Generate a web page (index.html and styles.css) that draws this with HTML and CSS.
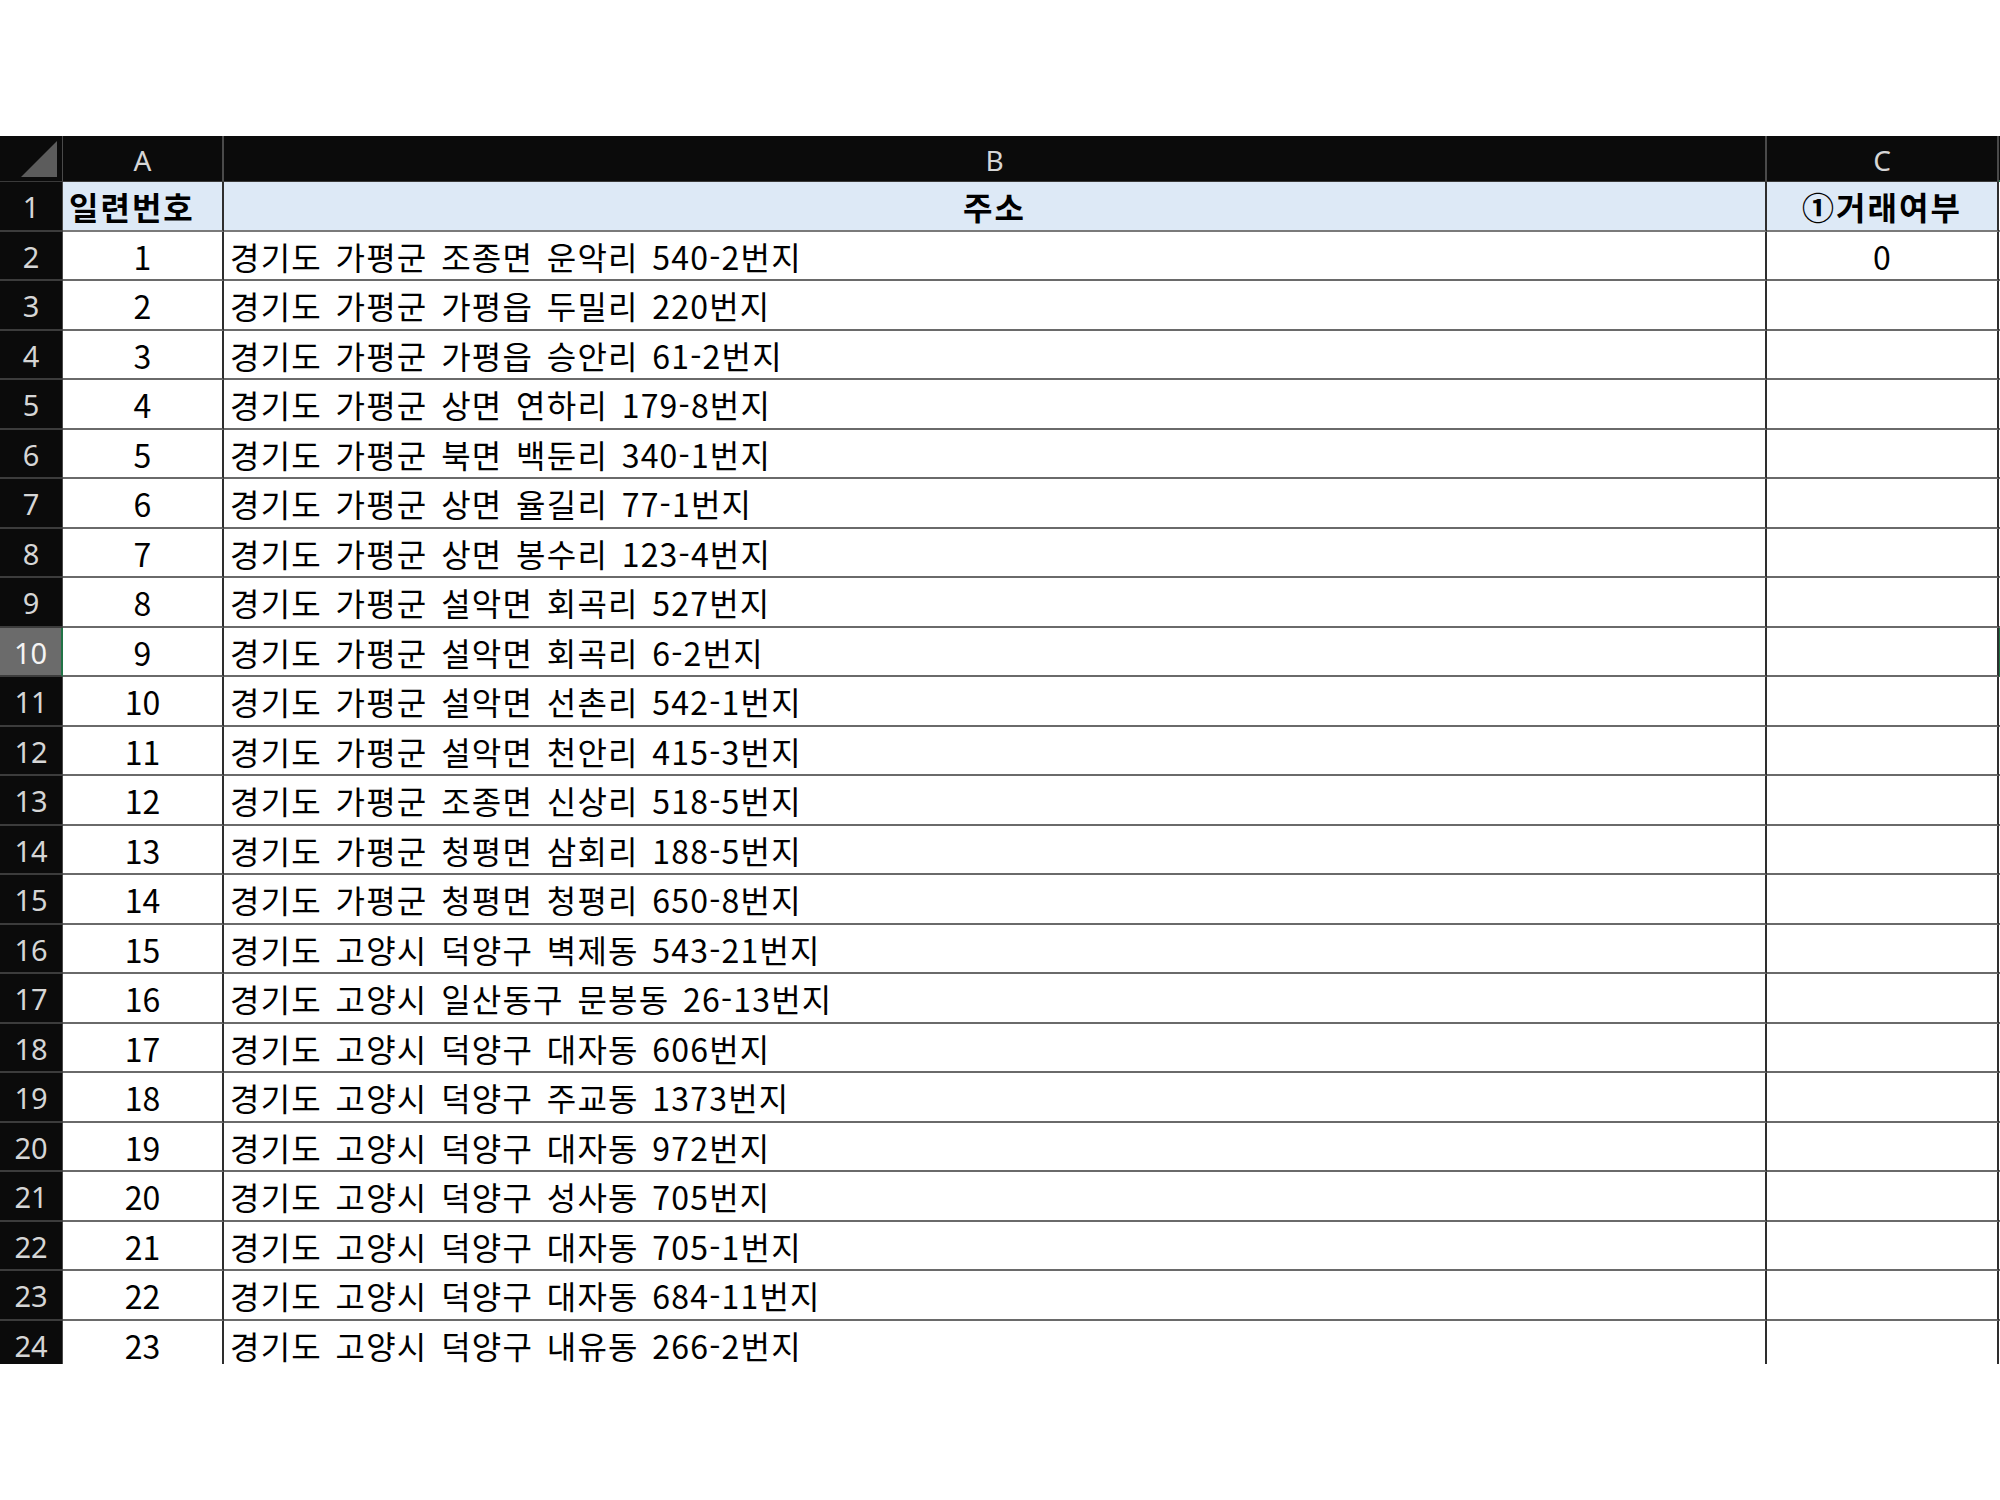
FILE: index.html
```html
<!DOCTYPE html>
<html lang="ko">
<head>
<meta charset="utf-8">
<title>Sheet</title>
<link rel="stylesheet" href="styles.css">
</head>
<body>
<div class="sheet">
  <div class="row head">
    <div class="corner"><svg class="tri" width="40" height="40" viewBox="0 0 40 40"><polygon points="38,2 38,38 2,38" fill="#5c5c5c"/></svg></div>
    <div class="colh">A</div>
    <div class="colh">B</div>
    <div class="colh">C</div>
    <div class="colh sel-col"></div>
  </div>
  <div class="row title">
    <div class="rowh">1</div>
    <div class="cell left bold">일련번호</div>
    <div class="cell center bold">주소</div>
    <div class="cell center bold">①거래여부</div>
    <div class="cell blank"></div>
  </div>
  <div class="row"><div class="rowh">2</div><div class="cell center">1</div><div class="cell left">경기도 가평군 조종면 운악리 540-2번지</div><div class="cell center">0</div><div class="cell blank"></div></div>
  <div class="row"><div class="rowh">3</div><div class="cell center">2</div><div class="cell left">경기도 가평군 가평읍 두밀리 220번지</div><div class="cell"></div><div class="cell blank"></div></div>
  <div class="row"><div class="rowh">4</div><div class="cell center">3</div><div class="cell left">경기도 가평군 가평읍 승안리 61-2번지</div><div class="cell"></div><div class="cell blank"></div></div>
  <div class="row"><div class="rowh">5</div><div class="cell center">4</div><div class="cell left">경기도 가평군 상면 연하리 179-8번지</div><div class="cell"></div><div class="cell blank"></div></div>
  <div class="row"><div class="rowh">6</div><div class="cell center">5</div><div class="cell left">경기도 가평군 북면 백둔리 340-1번지</div><div class="cell"></div><div class="cell blank"></div></div>
  <div class="row"><div class="rowh">7</div><div class="cell center">6</div><div class="cell left">경기도 가평군 상면 율길리 77-1번지</div><div class="cell"></div><div class="cell blank"></div></div>
  <div class="row"><div class="rowh">8</div><div class="cell center">7</div><div class="cell left">경기도 가평군 상면 봉수리 123-4번지</div><div class="cell"></div><div class="cell blank"></div></div>
  <div class="row"><div class="rowh">9</div><div class="cell center">8</div><div class="cell left">경기도 가평군 설악면 회곡리 527번지</div><div class="cell"></div><div class="cell blank"></div></div>
  <div class="row"><div class="rowh selected">10</div><div class="cell center">9</div><div class="cell left">경기도 가평군 설악면 회곡리 6-2번지</div><div class="cell"></div><div class="cell blank active"></div></div>
  <div class="row"><div class="rowh">11</div><div class="cell center">10</div><div class="cell left">경기도 가평군 설악면 선촌리 542-1번지</div><div class="cell"></div><div class="cell blank"></div></div>
  <div class="row"><div class="rowh">12</div><div class="cell center">11</div><div class="cell left">경기도 가평군 설악면 천안리 415-3번지</div><div class="cell"></div><div class="cell blank"></div></div>
  <div class="row"><div class="rowh">13</div><div class="cell center">12</div><div class="cell left">경기도 가평군 조종면 신상리 518-5번지</div><div class="cell"></div><div class="cell blank"></div></div>
  <div class="row"><div class="rowh">14</div><div class="cell center">13</div><div class="cell left">경기도 가평군 청평면 삼회리 188-5번지</div><div class="cell"></div><div class="cell blank"></div></div>
  <div class="row"><div class="rowh">15</div><div class="cell center">14</div><div class="cell left">경기도 가평군 청평면 청평리 650-8번지</div><div class="cell"></div><div class="cell blank"></div></div>
  <div class="row"><div class="rowh">16</div><div class="cell center">15</div><div class="cell left">경기도 고양시 덕양구 벽제동 543-21번지</div><div class="cell"></div><div class="cell blank"></div></div>
  <div class="row"><div class="rowh">17</div><div class="cell center">16</div><div class="cell left">경기도 고양시 일산동구 문봉동 26-13번지</div><div class="cell"></div><div class="cell blank"></div></div>
  <div class="row"><div class="rowh">18</div><div class="cell center">17</div><div class="cell left">경기도 고양시 덕양구 대자동 606번지</div><div class="cell"></div><div class="cell blank"></div></div>
  <div class="row"><div class="rowh">19</div><div class="cell center">18</div><div class="cell left">경기도 고양시 덕양구 주교동 1373번지</div><div class="cell"></div><div class="cell blank"></div></div>
  <div class="row"><div class="rowh">20</div><div class="cell center">19</div><div class="cell left">경기도 고양시 덕양구 대자동 972번지</div><div class="cell"></div><div class="cell blank"></div></div>
  <div class="row"><div class="rowh">21</div><div class="cell center">20</div><div class="cell left">경기도 고양시 덕양구 성사동 705번지</div><div class="cell"></div><div class="cell blank"></div></div>
  <div class="row"><div class="rowh">22</div><div class="cell center">21</div><div class="cell left">경기도 고양시 덕양구 대자동 705-1번지</div><div class="cell"></div><div class="cell blank"></div></div>
  <div class="row"><div class="rowh">23</div><div class="cell center">22</div><div class="cell left">경기도 고양시 덕양구 대자동 684-11번지</div><div class="cell"></div><div class="cell blank"></div></div>
  <div class="row"><div class="rowh">24</div><div class="cell center">23</div><div class="cell left">경기도 고양시 덕양구 내유동 266-2번지</div><div class="cell"></div><div class="cell blank"></div></div>
</div>
</body>
</html>
```
FILE: styles.css
```css
html, body {
  margin: 0;
  padding: 0;
  background: #ffffff;
  overflow: hidden;
}
body {
  width: 2000px;
  height: 1500px;
}
.sheet {
  margin-top: 136px;
  height: 1228px;
  width: 2000px;
  overflow: hidden;
  background: #ffffff;
}
.row {
  display: grid;
  grid-template-columns: 63px 161px 1543px 232px 220px;
  height: 49.5px;
  width: 2219px;
}
.row.head {
  height: 46px;
}
.corner {
  position: relative;
  background: #0b0b0b;
  border-right: 1px solid #4a4a4a;
  border-bottom: 1px solid #3a3a3a;
}
.tri {
  position: absolute;
  right: 3px;
  bottom: 2px;
}
.colh {
  background: #0b0b0b;
  color: #d6d6d6;
  font-family: "Noto Sans", "Open Sans", sans-serif;
  font-size: 28px;
  display: flex;
  align-items: center;
  justify-content: center;
  border-right: 2px solid #4a4a4a;
  border-bottom: 1px solid #3a3a3a;
  box-sizing: border-box;
  padding-top: 2px;
}
.colh.sel-col {
  border-bottom: 2px solid #1e7145;
}
.rowh {
  background: #0b0b0b;
  color: #d6d6d6;
  font-family: "Noto Sans", "Open Sans", sans-serif;
  font-size: 29px;
  display: flex;
  align-items: center;
  justify-content: center;
  border-right: 1px solid #4a4a4a;
  border-bottom: 2px solid #3c3c3c;
  box-sizing: border-box;
  padding-top: 2px;
}
.rowh.selected {
  background: #6b6b6b;
  color: #f4f4f4;
  border-right: 2px solid #217346;
}
.cell {
  box-sizing: border-box;
  border-right: 2px solid #2e2e2e;
  border-bottom: 2px solid #6a6a6a;
  font-family: "Noto Sans CJK KR", sans-serif;
  font-size: 32px;
  color: #000000;
  display: flex;
  align-items: center;
  white-space: nowrap;
  overflow: hidden;
  padding-top: 1px;
}
.cell.left {
  justify-content: flex-start;
  padding-left: 6px;
  letter-spacing: 1.2px;
  word-spacing: 3.5px;
}
.cell.center {
  justify-content: center;
}
.cell.bold {
  font-weight: 700;
  letter-spacing: 2px;
  word-spacing: 0;
}
.title .cell {
  background: #dde9f6;
  border-bottom: 2px solid #7a7a7a;
}
.title .cell.blank {
  background: #ffffff;
}
.cell.blank {
  border-right: none;
}
.cell.active {
  border-left: 4px solid #217346;
}
```
